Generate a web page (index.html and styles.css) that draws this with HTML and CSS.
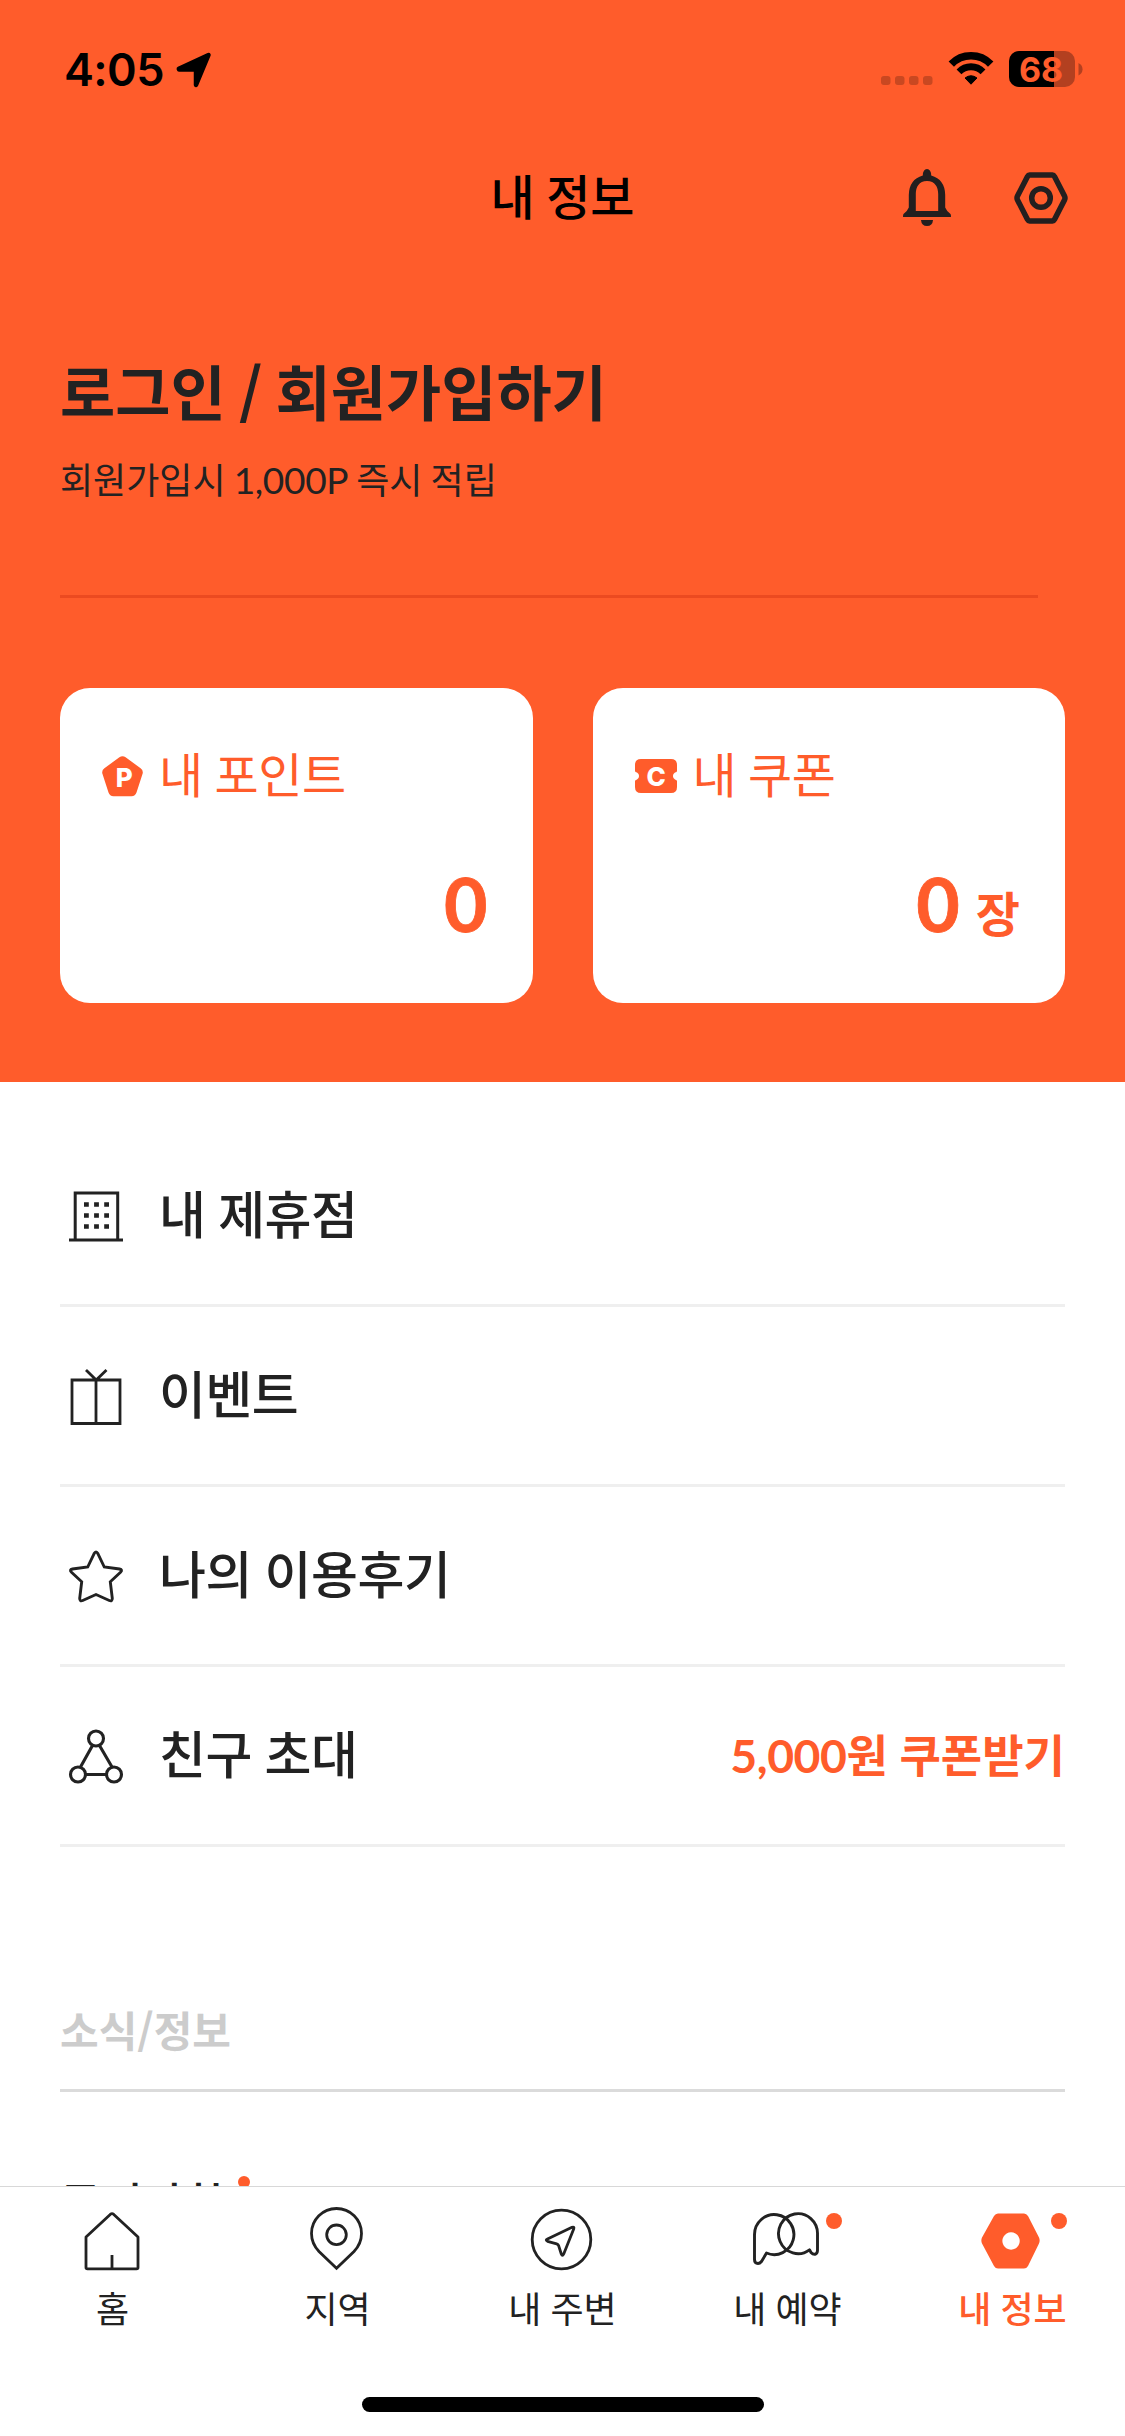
FILE: index.html
```html
<!DOCTYPE html>
<html lang="ko">
<head>
<meta charset="utf-8">
<title>내 정보</title>
<link rel="stylesheet" href="styles.css">
</head>
<body>
<div class="screen">
  <main class="content">
    <section class="hero">
      <div class="status">
        <div class="status-left">
          <span class="time">4:05</span>
          <svg class="location" width="36" height="36" viewBox="0 0 36 36"><path d="M2.800 16.700 32.500 3 20 33V17.500H3Z" fill="#000" stroke="#000" stroke-width="4.500" stroke-linejoin="round"/></svg>
        </div>
        <div class="status-right">
          <svg class="signal" width="52" height="9" viewBox="0 0 52 9"><g fill="#c94821"><rect width="9.500" height="9" rx="3"/><rect x="14" width="9.500" height="9" rx="3"/><rect x="28" width="9.500" height="9" rx="3"/><rect x="42" width="9.500" height="9" rx="3"/></g></svg>
          <svg class="wifi" width="46" height="34" viewBox="0 0 46 34"><g fill="none" stroke="#000"><path d="M3.300 12.200a27.400 27.400 0 0 1 39.400 0" stroke-width="7.500"/><path d="M11 19.800a16.800 16.800 0 0 1 24 0" stroke-width="6.800"/></g><path d="M17 26q6-4.500 12 0l-6 6.200Z" stroke="#000" stroke-linejoin="round"/></svg>
          <svg class="battery" width="74" height="37" viewBox="0 0 74 37">
            <defs><clipPath id="cell"><rect width="66" height="36" rx="10"/></clipPath></defs>
            <g clip-path="url(#cell)"><rect width="66" height="36" fill="#b34020"/><rect width="45" height="36"/></g>
            <path d="M69.500 12q4 2 4 6.200t-4 6.200Z" fill="#b34020"/>
            <text x="32" y="30.500" class="battery-level">68</text>
          </svg>
        </div>
      </div>
      <header class="titlebar">
        <h1>내 정보</h1>
        <div class="actions">
          <svg width="48" height="58" viewBox="0 0 48 58" fill="#231f1f"><path fill-rule="evenodd" d="M19.800 6.500Q20 0 24 0t4.200 6.500Q42 10.500 42.200 26v12.500q1 3 5.300 6.500.5.500.5 3H0q0-2.500.5-3 4.300-3.500 5.300-6.500V26Q6 10.500 19.800 6.500ZM24 12C16 12 12.800 18 12.800 25v17h22.400V25C35.200 18 32 12 24 12Z"/><path d="M18 51h12q-.5 6-6 6t-6-6Z"/></svg>
          <svg width="54" height="52" viewBox="0 0 54 52" fill="none" stroke="#231f1f"><path d="M15.500 3h23q1.200 0 2 1.500l10 19.500q1 2 0 4l-10 19.500q-.8 1.500-2 1.500h-23q-1.200 0-2-1.500L3.500 28q-1-2 0-4l10-19.500q.8-1.500 2-1.500Z" stroke-width="5.500"/><circle cx="27" cy="26" r="9.300" stroke-width="5.500"/></svg>
        </div>
      </header>
      <div class="login">
        <h2>로그인 / 회원가입하기</h2>
        <p>회원가입시 <span class="latin">1,000P</span> 즉시 적립</p>
      </div>
      <div class="cards">
        <article class="card">
          <div class="card-title">
            <svg width="41" height="40" viewBox="0 0 41 40"><path d="M20.500 5.500 35.500 16.500 29.500 35h-18L5.500 16.500Z" fill="#ff5c2b" stroke="#ff5c2b" stroke-width="10.500" stroke-linejoin="round"/><text x="22" y="31" class="icon-letter">P</text></svg>
            <span>내 포인트</span>
          </div>
          <div class="amount"><strong>0</strong></div>
        </article>
        <article class="card">
          <div class="card-title">
            <svg width="42" height="34" viewBox="0 0 42 34"><path d="M6 0h30q6 0 6 6v6q0 1-2 1.500a4 4 0 0 0 0 7q2 .5 2 1.500v6q0 6-6 6H6q-6 0-6-6v-6q0-1 2-1.500a4 4 0 0 0 0-7Q0 13 0 12V6q0-6 6-6Z" fill="#ff5c2b"/><text x="21" y="26.500" class="icon-letter">C</text></svg>
            <span>내 쿠폰</span>
          </div>
          <div class="amount"><strong>0</strong><span class="unit">장</span></div>
        </article>
      </div>
    </section>

    <ul class="menu">
      <li>
        <svg width="54" height="54" viewBox="0 0 54 54" fill="none" stroke="#222"><path d="M6.200 51V4h42.500V51M0 51h54" stroke-width="3"/><path d="M15 15.500h25M15 26.500h25M15 37.500h25" stroke-width="4.600" stroke-dasharray="4.800 5.300"/></svg>
        <span>내 제휴점</span>
      </li>
      <li>
        <svg width="54" height="60" viewBox="0 0 54 60" fill="none" stroke="#222" stroke-width="2.800"><path d="M3 14h48v43.500h-48ZM27 14v43.500M17 4l10.200 10L37.500 4"/></svg>
        <span>이벤트</span>
      </li>
      <li>
        <svg width="54" height="54" viewBox="0 0 54 54" fill="none" stroke="#222" stroke-width="2.900"><path d="M25 4.800q2-3.600 4 0l6.300 13.200 15.200 2q3.500.8 1 3.300L41.300 32.800l2 16.500q0 3.500-3 2.200L27 45.500 13.700 51.500q-3 1.300-3-2.200l2-16.500L2.500 23.300q-2.500-2.500 1-3.300l15.200-2Z"/></svg>
        <span>나의 이용후기</span>
      </li>
      <li>
        <svg width="54" height="54" viewBox="0 0 54 54" fill="none" stroke="#222" stroke-width="3.100"><circle cx="27" cy="9.500" r="7.500"/><circle cx="9" cy="45.500" r="7.500"/><circle cx="45" cy="45.500" r="7.500"/><path d="m23.500 16.500-12 21.500M30.500 16.500l12.500 21.500M17 45.500h20"/></svg>
        <span>친구 초대</span>
        <em><b class="latin">5,000</b>원 쿠폰받기</em>
      </li>
    </ul>

    <section class="news">
      <h3>소식/정보</h3>
      <div class="notice"><span>공지사항</span><i class="dot"></i></div>
    </section>
  </main>

  <nav class="tabs">
    <div class="tab-list">
      <a class="tab">
        <svg width="66" height="66" viewBox="0 0 66 66" fill="none" stroke="#222" stroke-width="2.800" stroke-linejoin="round"><path d="M7 30 31.500 7.200q1.500-1.200 3 0L59 30v30.500q0 1.300-1.500 1.300h-49Q7 61.800 7 60.500ZM33 48v13.500"/></svg>
        <span>홈</span>
      </a>
      <a class="tab">
        <svg width="66" height="66" viewBox="0 0 66 66" fill="none" stroke="#222" stroke-width="2.800"><path d="M32.500 61.300 15 44.500Q7.500 36.500 7.500 26.500a25 25 0 0 1 50 0q0 10-7.500 18Z"/><circle cx="32.500" cy="27.800" r="9.800"/></svg>
        <span>지역</span>
      </a>
      <a class="tab">
        <svg width="66" height="66" viewBox="0 0 66 66" fill="none" stroke="#222" stroke-width="2.800"><circle cx="32.500" cy="32.500" r="29.300"/><path d="M43 20.300q2.600-1 1.700 1.700l-10 25q-1.300 2.800-2.400 0l-2.600-8.200q-.6-1.600-2-2l-9.200-2.500q-2.500-1.200 0-2.400Z" stroke-linejoin="round"/></svg>
        <span>내 주변</span>
      </a>
      <a class="tab">
        <svg width="66" height="66" viewBox="0 0 66 66" fill="none" stroke="#222" stroke-width="2.900" stroke-linejoin="round"><path d="M.5 27.500a19.700 20 0 1 1 12 18.500l-5 8.500q-1.700 2-3.500 2-3.500 0-3.500-4ZM63.500 27.500a19.500 20 0 1 0-8 15.300l1.500 2.700q1.800 2 4 1.800 2.500-.7 2.500-4Z"/></svg>
        <span>내 예약</span>
        <i class="badge"></i>
      </a>
      <a class="tab active">
        <svg width="66" height="66" viewBox="-1 0 66 66"><path fill-rule="evenodd" fill="#ff5c2b" d="M18 6.500h26q2.500 0 4 2.500l11 21.500q1.300 3 0 6L48 59q-1.500 2.500-4 2.500H18q-2.500 0-4-2.500L2 36.500q-1.300-3 0-6L14 9q1.500-2.500 4-2.500ZM31 25.300a8.700 8.700 0 1 0 .1 0Z"/></svg>
        <span>내 정보</span>
        <i class="badge"></i>
      </a>
    </div>
    <div class="home-indicator"></div>
  </nav>
</div>
</body>
</html>
```
FILE: styles.css
```css
* { box-sizing: border-box; margin: 0; padding: 0; }

body {
  background: #fff;
  color: #222;
  font-family: "Noto Sans CJK KR", sans-serif;
  word-spacing: -1px;
}

svg { display: block; flex: none; overflow: visible; }

.latin {
  font-family: Lato, sans-serif;
  font-size: 1.03em;
  font-weight: inherit;
  line-height: 1;
  letter-spacing: -0.01em;
}

.screen {
  display: flex;
  flex-direction: column;
  width: 1125px;
  height: 2436px;
  overflow: hidden;
}

.content { height: 2186px; overflow: hidden; }

/* Header block */
.hero { height: 1082px; background: #ff5c2b; }

.status {
  display: flex;
  justify-content: space-between;
  height: 132px;
  padding: 51px 42px 0 64px;
}
.status-left { display: flex; gap: 12px; height: 37px; align-items: center; }
.time {
  font: 600 45px/37px Inter, sans-serif;
  color: #000;
  letter-spacing: -0.6px;
}
.status-right { display: flex; align-items: flex-start; }
.signal { margin: 25px 15px 0 0; }
.wifi { margin: 1px 15px 0 0; }
.battery-level {
  font: 700 34px Inter, sans-serif;
  fill: #ff5c2b;
  text-anchor: middle;
}

.titlebar {
  display: grid;
  grid-template-columns: 1fr auto 1fr;
  align-items: center;
  height: 132px;
  padding: 0 57px;
}
.titlebar h1 {
  grid-column: 2;
  font-size: 48px;
  line-height: 72px;
  font-weight: 500;
  color: #000;
  margin-top: -8px;
  word-spacing: -2px;
}
.actions {
  display: flex;
  justify-content: flex-end;
  align-items: center;
  gap: 63px;
}

.login {
  height: 334px;
  margin: 0 87px 0 60px;
  padding-top: 84px;
  border-bottom: 3px solid #ec4a20;
}
.login h2 { font-size: 60px; line-height: 84px; font-weight: 700; word-spacing: -3.5px; }
.login p { font-size: 36px; line-height: 54px; margin-top: 19px; word-spacing: -2px; }

.cards {
  display: grid;
  grid-template-columns: 1fr 1fr;
  gap: 60px;
  padding: 90px 60px 0;
}
.card {
  display: flex;
  flex-direction: column;
  justify-content: space-between;
  height: 315px;
  padding: 52px 45px 50px 42px;
  border-radius: 30px;
  background: #fff;
  color: #ff5c2b;
}
.card-title {
  display: flex;
  align-items: center;
  gap: 16px;
  height: 72px;
  font-size: 48px;
  line-height: 72px;
  letter-spacing: -0.5px;
}
.card-title span { margin-top: -8px; }
.icon-letter {
  font: 800 26px Inter, sans-serif;
  fill: #fff;
  text-anchor: middle;
}
.amount {
  display: flex;
  justify-content: flex-end;
  align-items: baseline;
  gap: 16px;
  height: 100px;
  line-height: 100px;
}
.amount strong { font: 700 75px/100px Lato, sans-serif; -webkit-text-stroke: 0.8px; }
.unit { font-size: 48px; font-weight: 700; line-height: 60px; }

/* Menu */
.menu { list-style: none; padding: 45px 60px 0; }
.menu li {
  display: flex;
  align-items: center;
  height: 180px;
  padding-left: 9px;
  border-bottom: 3px solid #efefef;
  font-size: 51px;
  font-weight: 500;
  letter-spacing: -0.5px;
}
.menu span { margin-left: 36px; line-height: 76px; margin-top: -7px; }
.menu em {
  margin: -4px 0 0 auto;
  color: #ff5c2b;
  font-size: 45px;
  font-style: normal;
  font-weight: 700;
  letter-spacing: 0;
}

.news { padding: 152px 60px 0; }
.news h3 {
  height: 93px;
  border-bottom: 3px solid #dbdbdb;
  color: #ccc;
  font-size: 42px;
  line-height: 60px;
  font-weight: 700;
}
.notice {
  display: flex;
  align-items: flex-start;
  gap: 12px;
  padding-top: 77px;
  font-size: 45px;
  font-weight: 500;
  line-height: 66px;
}
.dot {
  width: 12px;
  height: 12px;
  margin-top: 7px;
  border-radius: 50%;
  background: #ff5c2b;
}

/* Bottom tabs */
.tabs {
  display: flex;
  flex-direction: column;
  align-items: center;
  height: 250px;
  border-top: 1px solid #d8d8d8;
  background: #fff;
}
.tab-list {
  display: grid;
  grid-template-columns: repeat(5, 225px);
  width: 1125px;
  height: 210px;
}
.tab {
  position: relative;
  display: flex;
  flex-direction: column;
  align-items: center;
  padding-top: 20px;
  font-size: 36px;
  line-height: 54px;
}
.tab svg { margin-right: 2px; }
.tab span { margin-top: 7px; }
.tab.active { color: #ff5c2b; font-weight: 500; }
.badge {
  position: absolute;
  left: 151px;
  top: 26px;
  width: 16px;
  height: 16px;
  border-radius: 50%;
  background: #ff5c2b;
}
.home-indicator { width: 402px; height: 15px; border-radius: 8px; background: #000; }
```
